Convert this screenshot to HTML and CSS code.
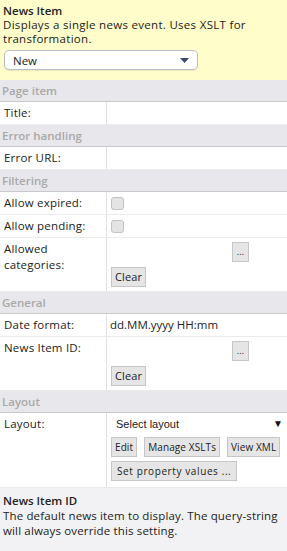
FILE: index.html
```html
<!DOCTYPE html>
<html>
<head>
<meta charset="utf-8">
<link rel="stylesheet" href="styles.css">
</head>
<body>
<div class="intro">
  <div class="intro-title">News Item</div>
  <div class="intro-desc">Displays a single news event. Uses XSLT for transformation.</div>
  <div class="select">
    <span>New</span>
    <svg class="caret" width="9" height="5" viewBox="0 0 9 5"><path d="M0 0h9L4.5 5z" fill="#3d4a66"/></svg>
  </div>
</div>

<div class="section">Page item</div>
<div class="row"><div class="label">Title:</div><div class="value"></div></div>

<div class="section">Error handling</div>
<div class="row"><div class="label">Error URL:</div><div class="value"></div></div>

<div class="section">Filtering</div>
<div class="row"><div class="label">Allow expired:</div><div class="value"><span class="check"></span></div></div>
<div class="row"><div class="label">Allow pending:</div><div class="value"><span class="check"></span></div></div>
<div class="row tall"><div class="label">Allowed categories:</div><div class="value stack"><div class="pick"><span class="btn dots">...</span></div><div><span class="btn">Clear</span></div></div></div>

<div class="section">General</div>
<div class="row"><div class="label">Date format:</div><div class="value text">dd.MM.yyyy HH:mm</div></div>
<div class="row tall"><div class="label">News Item ID:</div><div class="value stack"><div class="pick"><span class="btn dots">...</span></div><div><span class="btn">Clear</span></div></div></div>

<div class="section">Layout</div>
<div class="row layout"><div class="label">Layout:</div><div class="value stack">
  <div class="layout-select"><span>Select layout</span><span class="tri">▼</span></div>
  <div class="btns"><span class="btn">Edit</span><span class="btn">Manage XSLTs</span><span class="btn">View XML</span></div>
  <div class="btns"><span class="btn wide">Set property values ...</span></div>
</div></div>

<div class="help">
  <div class="help-title">News Item ID</div>
  <div class="help-desc">The default news item to display. The query-string will always override this setting.</div>
</div>
</body>
</html>
```

FILE: styles.css
```css
html, body {
  margin: 0;
  padding: 0;
}
body {
  width: 287px;
  height: 551px;
  background: #f2f2f4;
  font-family: "Open Sans", "Noto Sans", sans-serif;
  font-size: 11.5px;
  color: #222;
  overflow: hidden;
}
.intro {
  background: #fffdc9;
  padding: 3px 4px 0 3px;
  height: 77px;
}
.intro-title {
  font-weight: 600;
  line-height: 15px;
}
.intro-desc {
  line-height: 14px;
  letter-spacing: 0.3px;
}
.select {
  margin-top: 4px;
  margin-left: 1px;
  width: 194px;
  height: 20px;
  box-sizing: border-box;
  background: #fff;
  border: 1px solid #b9bdc9;
  border-radius: 5px;
  box-shadow: 0 1px 1px rgba(0,0,0,0.08);
  display: flex;
  align-items: center;
  justify-content: space-between;
  padding: 0 8px 0 8px;
}
.caret { margin-top: 1px; }
.section {
  background: #e8e7eb;
  color: #a9a9a9;
  font-weight: 600;
  height: 21px;
  line-height: 21px;
  padding-left: 2px;
  border-bottom: 1px solid #c9c9cb;
}
.row {
  display: grid;
  grid-template-columns: 107px 1fr;
  background: #fff;
  border-bottom: 1px solid #ebebeb;
  min-height: 22px;
}
.label {
  padding: 3px 4px 0 4px;
  line-height: 16px;
  border-right: 1px solid #e2e2e2;
  letter-spacing: 0.2px;
}
.value {
  padding: 3px 4px 0 4px;
  line-height: 16px;
}
.value.text { padding-left: 3px; }
.check {
  display: block;
  margin-top: 2px;
  width: 11px;
  height: 11px;
  border: 1px solid #c2c2c2;
  border-radius: 3px;
  background: #e4e4e4;
}
.tall { height: 53px; }
.stack {
  display: flex;
  flex-direction: column;
  gap: 5px;
  padding-top: 4px;
}
.pick {
  padding-left: 121px;
}
.btn {
  display: inline-block;
  height: 20px;
  box-sizing: border-box;
  line-height: 18px;
  padding: 0 3px;
  background: #e5e5e5;
  border: 1px solid #c6c6c6;
  font-size: 11px;
  letter-spacing: 0.1px;
  color: #222;
  white-space: nowrap;
}
.dots {
  width: 17px;
  padding: 0;
  text-align: center;
  font-size: 9px;
}
.layout { height: 74px; }
.layout .stack { gap: 4px; padding-top: 2px; }
.layout-select {
  display: flex;
  justify-content: space-between;
  padding-left: 5px;
  line-height: 18px;
  font-size: 11px;
  font-family: "Liberation Sans", sans-serif;
}
.tri { font-size: 10px; color: #111; }
.btns {
  display: flex;
  gap: 7px;
  white-space: nowrap;
}
.btns .btn { font-size: 10px; letter-spacing: 0.1px; }
.btns .btn.wide { letter-spacing: 0.6px; padding: 0 5px; }
.help {
  padding: 5px 3px;
}
.help-title {
  font-weight: 600;
  line-height: 15px;
}
.help-desc {
  line-height: 15px;
  letter-spacing: 0.15px;
}
```
